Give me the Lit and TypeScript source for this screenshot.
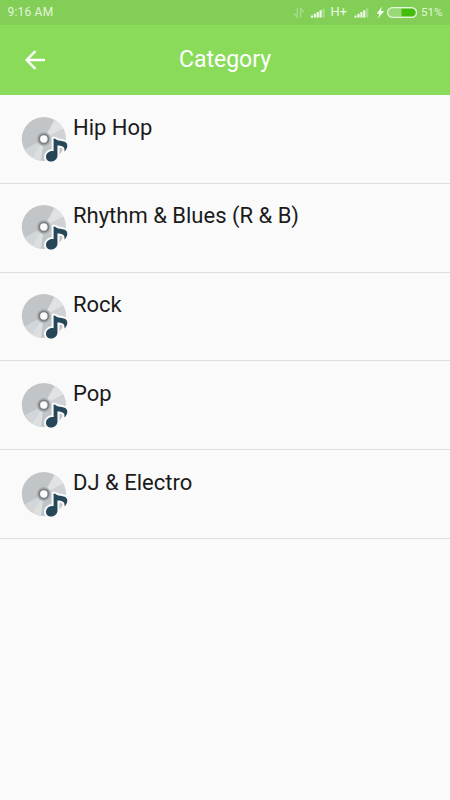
import { LitElement, html, css, svg } from "lit";
import { customElement, property } from "lit/decorators.js";

@customElement("disc-icon")
class DiscIcon extends LitElement {
  static styles = css`
    :host { display: block; width: 48px; height: 48px; }
    svg { display: block; overflow: visible; }
  `;
  render() {
    const note = "M31.6 21.4 C34.2 21.6 34.4 23 36.4 23.4 C39.4 24 42.4 23.6 44.4 26 C46.4 28.6 44.8 32.4 42.4 34.6 C43.2 30.6 41.4 28.4 35.4 28.4 L35.5 38.6 C35.4 42 32.6 44.6 29.2 44.6 C26.2 44.6 24 42.6 24 39.9 C24 36.4 27.4 33.6 31.6 34.2 Z";
    return html`<svg width="48" height="48" viewBox="0 0 48 48">
      <circle cx="21.8" cy="22" r="22" fill="#c1c5c8" />
      <path d="M21.8 22 L32.6 2.8 A22 22 0 0 1 41.3 11.8 Z" fill="#e0e2e3" />
      <path d="M21.8 22 L41.3 11.8 A22 22 0 0 1 43.8 22 Z" fill="#d0d3d5" />
      <path d="M21.8 22 L2.5 32.5 A22 22 0 0 0 10.2 40.7 Z" fill="#d3d6d8" />
      <path d="M21.8 22 L10.2 40.7 A22 22 0 0 0 19 43.8 Z" fill="#dcdfe0" />
      <circle cx="21.8" cy="22" r="7" fill="#a9afb3" />
      <circle cx="21.8" cy="22" r="4.6" fill="#fafafa" stroke="#7b8287" stroke-width="1.8" />
      <path d=${note} fill="#fafafa" stroke="#fafafa" stroke-width="4" stroke-linejoin="round" />
      <path d=${note} fill="#26465a" />
    </svg>`;
  }
}

@customElement("status-bar")
class StatusBar extends LitElement {
  static styles = css`
    :host { display: flex; justify-content: space-between; height: 25px; box-sizing: border-box; background: #82ce57; color: #e4f5da; font: 12px/24px Roboto, sans-serif; padding: 0 0 0 7.5px; }
    svg { display: block; }
    .time { letter-spacing: 0.2px; }
  `;
  render() {
    const bars = (x: number) => [0, 1, 2, 3, 4].map(
      (i) => svg`<rect x=${x + i * 2.9} y=${15.6 - i * 1.8} width="2.2" height=${2 + i * 1.8} fill=${i === 4 ? "#a8dc8a" : "#f0faea"} />`
    );
    return html`<span class="time">9:16 AM</span>
      <svg width="160" height="25" viewBox="290 0 160 25">
        <path d="M297.3 8 V17 L293.8 13.2 M300.6 17.6 V8.6 L304 12.4" fill="none" stroke="#a9dc8b" stroke-width="1.4" />
        ${bars(310.8)}
        <text x="330.6" y="16.3" font-size="12.2" fill="#edf9e6" textLength="16.4" lengthAdjust="spacingAndGlyphs">H+</text>
        ${bars(354.5)}
        <path d="M381.8 6.8 L376.6 13.8 H379.4 L377.8 18.4 L384.2 11 H381 Z" fill="#f8fdf5" />
        <rect x="387.6" y="7.6" width="29" height="9.8" rx="4.9" fill="#99d877" stroke="#e4f5da" stroke-width="1.2" />
        <path d="M401.5 8.7 H411.6 A3.8 3.8 0 0 1 411.6 16.3 H401.5 Z" fill="#42bd0b" />
        <text x="421" y="16" font-size="11.8" fill="#e4f5da" textLength="21.5" lengthAdjust="spacingAndGlyphs">51%</text>
      </svg>`;
  }
}

@customElement("category-row")
class CategoryRow extends LitElement {
  @property() label = "";
  static styles = css`
    :host { display: flex; box-sizing: border-box; height: 88.8px; padding: 21.6px 0 0 22px; gap: 3px; border-bottom: 1.5px solid #dedede; }
    .label { font: 22px/26px Roboto, sans-serif; color: #1b1b1b; margin-top: -2px; white-space: nowrap; }
  `;
  render() {
    return html`<disc-icon></disc-icon><span class="label">${this.label}</span>`;
  }
}

@customElement("app-root")
class AppRoot extends LitElement {
  static styles = css`
    :host { display: block; height: 800px; background: #fafafa; overflow: hidden; }
    .bar { display: grid; grid-template-columns: 70px 1fr 70px; align-items: center; height: 70px; background: #8adb5a; }
    .back { display: block; margin-left: 24px; }
    .title { margin: 0; text-align: center; color: #fff; font: 400 23px/30px Roboto, sans-serif; }
  `;
  render() {
    const names = ["Hip Hop", "Rhythm & Blues (R & B)", "Rock", "Pop", "DJ & Electro"];
    return html`<status-bar></status-bar>
      <header class="bar">
        <svg class="back" width="24" height="24" viewBox="0 0 24 24">
          <path d="M21 12 H3 M11.5 3 L2.7 12 L11.5 21" fill="none" stroke="#fff" stroke-width="2.5" />
        </svg>
        <h1 class="title">Category</h1>
      </header>
      <main>${names.map((n) => html`<category-row .label=${n}></category-row>`)}</main>`;
  }
}
